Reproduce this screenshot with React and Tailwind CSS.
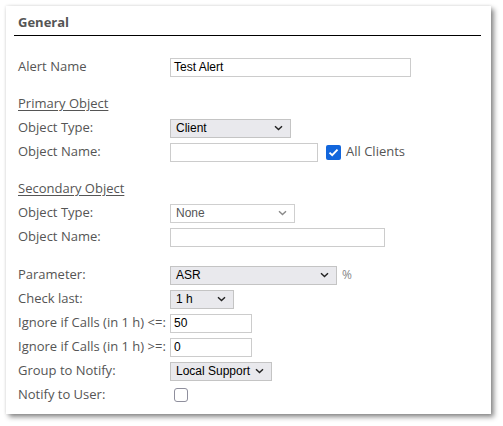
import React from 'react';

const labelFont = { fontFamily: '"Open Sans", "Noto Sans", sans-serif' };
const ctrlFont = { fontFamily: '"Liberation Sans", Arial, sans-serif' };

function Chevron({ muted }) {
  return (
    <svg width="9" height="6" viewBox="0 0 9 6" className="shrink-0">
      <path d="M1 1.2 L4.5 4.6 L8 1.2" fill="none" stroke={muted ? '#8a8a8a' : '#222'} strokeWidth="1.4" />
    </svg>
  );
}

function Select({ value, width, muted }) {
  return (
    <div
      className={`h-[19px] flex items-center justify-between pl-[5px] pr-[7px] border text-[12px] ${
        muted ? 'bg-white border-[#cfcfcf] text-[#555]' : 'bg-[#e9e9ed] border-[#c4c4c4] text-black'
      }`}
      style={{ ...ctrlFont, width }}
    >
      <span>{value}</span>
      <Chevron muted={muted} />
    </div>
  );
}

function Input({ value, width }) {
  return (
    <div
      className="h-[19px] flex items-center pl-[3px] bg-white border border-[#cccccc] text-[12px] text-black"
      style={{ ...ctrlFont, width }}
    >
      {value}
    </div>
  );
}

function Row({ label, children, className = '' }) {
  return (
    <div className={`h-[24px] flex items-center ${className}`}>
      <div className="w-[156px] shrink-0 pl-[4px] text-[13px] text-[#555] whitespace-nowrap" style={labelFont}>
        {label}
      </div>
      <div className="flex items-center">{children}</div>
    </div>
  );
}

function Heading({ children, className = '' }) {
  return (
    <div className={`h-[24px] flex items-center pl-[4px] ${className}`}>
      <span className="text-[13px] text-[#555] underline underline-offset-2" style={labelFont}>
        {children}
      </span>
    </div>
  );
}

export default function App() {
  return (
    <div className="w-[503px] h-[426px] bg-white pt-[6px] pl-[6px]">
      <div className="w-[485px] h-[408px] bg-white pl-[8px] pr-[10px] pt-[7px] shadow-[3px_3px_5px_rgba(0,0,0,0.45),0_0_3px_rgba(0,0,0,0.12)]">
        <div className="pl-[4px] pb-[4px] border-b border-black">
          <div className="text-[13px] leading-[18px] font-bold text-[#555]" style={labelFont}>General</div>
        </div>

        <Row label="Alert Name" className="mt-[19px]">
          <Input value="Test Alert" width={241} />
        </Row>

        <Heading className="mt-[13px]">Primary Object</Heading>
        <Row label="Object Type:">
          <Select value="Client" width={121} />
        </Row>
        <Row label="Object Name:">
          <Input value="" width={148} />
          <span className="ml-[8px] w-[15px] h-[15px] rounded-[2px] bg-[#1266dc] flex items-center justify-center">
            <svg width="11" height="9" viewBox="0 0 11 9">
              <path d="M1.5 4.6 L4.2 7.2 L9.5 1.6" fill="none" stroke="#fff" strokeWidth="1.9" />
            </svg>
          </span>
          <span className="ml-[5px] text-[13px] text-[#555]" style={labelFont}>All Clients</span>
        </Row>

        <Heading className="mt-[13px]">Secondary Object</Heading>
        <Row label="Object Type:">
          <Select value="None" width={125} muted />
        </Row>
        <Row label="Object Name:">
          <Input value="" width={215} />
        </Row>

        <Row label="Parameter:" className="mt-[14px]">
          <Select value="ASR" width={167} />
          <span className="ml-[5px] text-[12px] text-[#888]" style={labelFont}>%</span>
        </Row>
        <Row label="Check last:">
          <Select value="1 h" width={64} />
        </Row>
        <Row label="Ignore if Calls (in 1 h) <=:">
          <Input value="50" width={82} />
        </Row>
        <Row label="Ignore if Calls (in 1 h) >=:">
          <Input value="0" width={82} />
        </Row>
        <Row label="Group to Notify:">
          <Select value="Local Support" width={102} />
        </Row>
        <Row label="Notify to User:">
          <span className="ml-[4px] w-[14px] h-[14px] rounded-[3px] border border-[#8f8f9d] bg-white" />
        </Row>
      </div>
    </div>
  );
}
